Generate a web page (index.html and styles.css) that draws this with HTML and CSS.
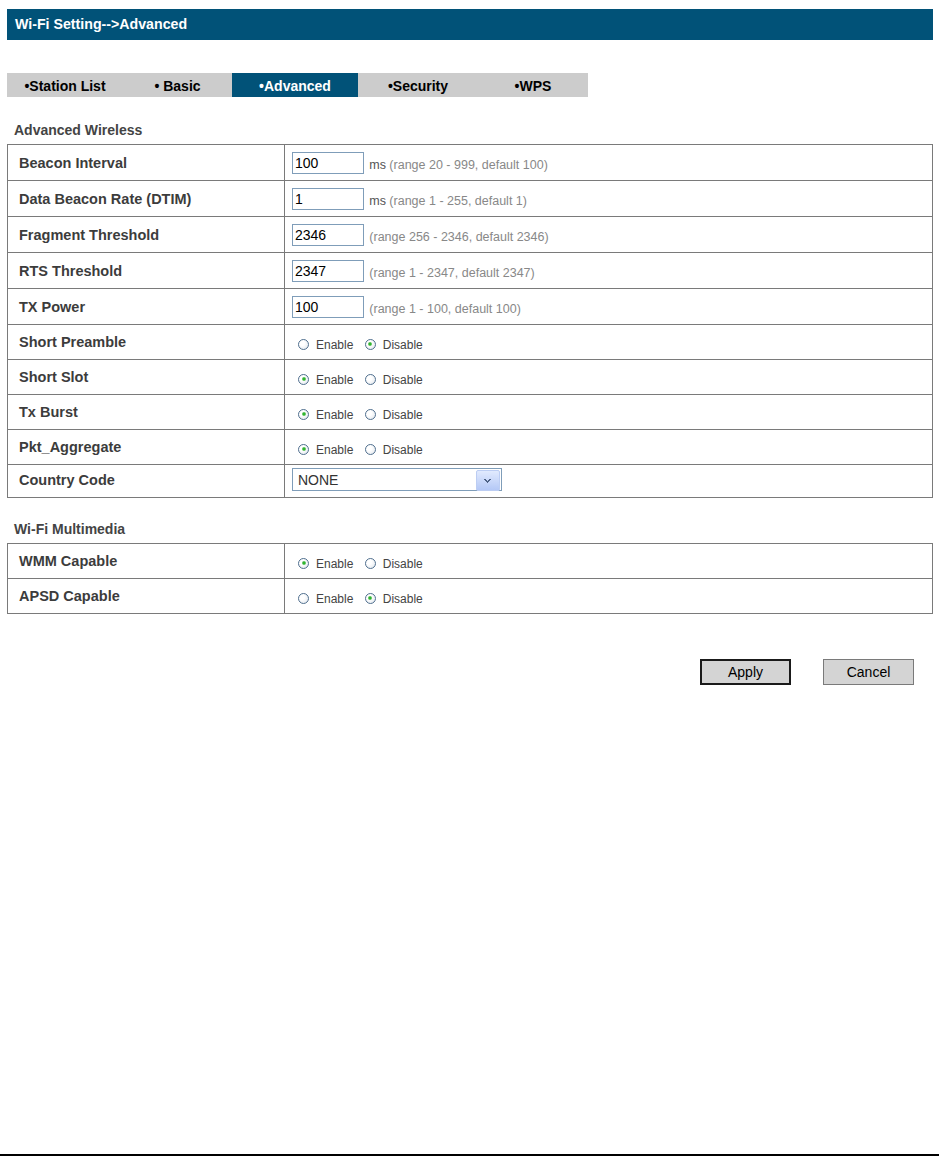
FILE: index.html
```html
<!doctype html>
<html lang="en">
    <head>
        <meta charset="UTF-8" />
        <title>Wi-Fi Setting - Advanced</title>
        <link rel="stylesheet" href="styles.css">
    </head>

    <body>
        <div class="page">
            <div class="title-bar">Wi-Fi Setting--&gt;Advanced</div>

            <div class="tabs">
                <a class="tab tab-station">&bull;Station List</a>
                <a class="tab tab-basic">&bull; Basic</a>
                <a class="tab tab-advanced active">&bull;Advanced</a>
                <a class="tab tab-security">&bull;Security</a>
                <a class="tab tab-wps">&bull;WPS</a>
            </div>

            <div class="section-title">Advanced Wireless</div>
            <table class="settings">
                <tr class="input-row">
                    <td class="label">Beacon Interval</td>
                    <td class="value">
                        <input type="text" value="100" />
                        <span class="unit">ms</span>
                        <span class="hint">(range 20 - 999, default 100)</span>
                    </td>
                </tr>
                <tr class="input-row">
                    <td class="label">Data Beacon Rate (DTIM)</td>
                    <td class="value">
                        <input type="text" value="1" />
                        <span class="unit">ms</span>
                        <span class="hint">(range 1 - 255, default 1)</span>
                    </td>
                </tr>
                <tr class="input-row">
                    <td class="label">Fragment Threshold</td>
                    <td class="value">
                        <input type="text" value="2346" />
                        <span class="hint">(range 256 - 2346, default 2346)</span>
                    </td>
                </tr>
                <tr class="input-row">
                    <td class="label">RTS Threshold</td>
                    <td class="value">
                        <input type="text" value="2347" />
                        <span class="hint">(range 1 - 2347, default 2347)</span>
                    </td>
                </tr>
                <tr class="input-row">
                    <td class="label">TX Power</td>
                    <td class="value">
                        <input type="text" value="100" />
                        <span class="hint">(range 1 - 100, default 100)</span>
                    </td>
                </tr>
                <tr class="radio-row">
                    <td class="label">Short Preamble</td>
                    <td class="value">
                        <label><input type="radio" name="preamble" />Enable</label>
                        <label><input type="radio" name="preamble" checked />Disable</label>
                    </td>
                </tr>
                <tr class="radio-row">
                    <td class="label">Short Slot</td>
                    <td class="value">
                        <label><input type="radio" name="slot" checked />Enable</label>
                        <label><input type="radio" name="slot" />Disable</label>
                    </td>
                </tr>
                <tr class="radio-row">
                    <td class="label">Tx Burst</td>
                    <td class="value">
                        <label><input type="radio" name="burst" checked />Enable</label>
                        <label><input type="radio" name="burst" />Disable</label>
                    </td>
                </tr>
                <tr class="radio-row">
                    <td class="label">Pkt_Aggregate</td>
                    <td class="value">
                        <label><input type="radio" name="aggregate" checked />Enable</label>
                        <label><input type="radio" name="aggregate" />Disable</label>
                    </td>
                </tr>
                <tr class="select-row">
                    <td class="label">Country Code</td>
                    <td class="value">
                        <div class="select-box">
                            <select>
                                <option>NONE</option>
                            </select>
                        </div>
                    </td>
                </tr>
            </table>

            <div class="section-title second">Wi-Fi Multimedia</div>
            <table class="settings">
                <tr class="radio-row">
                    <td class="label">WMM Capable</td>
                    <td class="value">
                        <label><input type="radio" name="wmm" checked />Enable</label>
                        <label><input type="radio" name="wmm" />Disable</label>
                    </td>
                </tr>
                <tr class="radio-row">
                    <td class="label">APSD Capable</td>
                    <td class="value">
                        <label><input type="radio" name="apsd" />Enable</label>
                        <label><input type="radio" name="apsd" checked />Disable</label>
                    </td>
                </tr>
            </table>

            <div class="actions">
                <button class="btn default">Apply</button>
                <button class="btn">Cancel</button>
            </div>
        </div>
        <div class="footer"></div>
    </body>
</html>
```

FILE: styles.css
```css
* {
    box-sizing: border-box;
}

body {
    margin: 0;
    background: white;
    font-family: "Liberation Sans", Arial, sans-serif;
    color: #333;
    min-height: 100vh;
    display: flex;
    flex-direction: column;
}

.page {
    padding: 9px 6px 0 7px;
    flex-grow: 1;
}

.title-bar {
    height: 31px;
    line-height: 31px;
    background: #015278;
    color: white;
    font-size: 14.2px;
    font-weight: bold;
    padding-left: 8px;
}

.tabs {
    display: flex;
    width: 581px;
    height: 24px;
    margin-top: 33px;
    background: #cccccc;
}

.tab {
    display: block;
    text-align: center;
    line-height: 26px;
    font-size: 14px;
    font-weight: bold;
    color: black;
    cursor: pointer;
}

.tab-station { width: 116px; }
.tab-basic { width: 109px; }
.tab-advanced { width: 126px; }
.tab-security { width: 120px; }
.tab-wps { width: 110px; }

.tab.active {
    background: #015278;
    color: white;
}

.section-title {
    font-size: 14px;
    font-weight: bold;
    color: #444;
    line-height: 16px;
    padding: 25px 0 6px 7px;
}

.section-title.second {
    padding-top: 23px;
}

.settings {
    width: 100%;
    border-collapse: collapse;
}

.settings td {
    border: 1px solid #7a7a7a;
    padding: 0;
}

.settings .label {
    width: 277px;
    padding-left: 11px;
    font-size: 14.5px;
    font-weight: bold;
    color: #3c3c3c;
}

.settings .value {
    padding-left: 7px;
    font-size: 12px;
}

.input-row td {
    height: 36px;
}

.radio-row td {
    height: 35px;
}

.radio-row .value {
    padding-top: 5px;
}

.select-row td {
    height: 33px;
    padding-bottom: 3px;
}

.value input[type="text"] {
    width: 72px;
    height: 22px;
    border: 1px solid #7f9db9;
    padding: 0 2px;
    font-family: "Liberation Sans", Arial, sans-serif;
    font-size: 14px;
    color: black;
    vertical-align: middle;
    margin: 0 2px 0 0;
}

.unit {
    color: #555;
    font-size: 12.5px;
    vertical-align: -3px;
}

.hint {
    color: #888;
    font-size: 12.5px;
    vertical-align: -3px;
}

.value label {
    color: #444;
    margin-right: 2px;
}

.value input[type="radio"] {
    appearance: none;
    width: 11px;
    height: 11px;
    margin: 0 7px 0 6px;
    border: 1px solid #51708f;
    border-radius: 50%;
    background: radial-gradient(circle at 35% 35%, #ffffff 30%, #dde3ea 100%);
    vertical-align: -1px;
    position: relative;
}

.value input[type="radio"]:checked::after {
    content: "";
    position: absolute;
    left: 2.5px;
    top: 2.5px;
    width: 4px;
    height: 4px;
    border-radius: 50%;
    background: radial-gradient(circle, #2fb52f 30%, #9fd69f 100%);
}

.select-box {
    position: relative;
    width: 210px;
    height: 23px;
}

.select-box select {
    appearance: none;
    width: 100%;
    height: 100%;
    border: 1px solid #7f9db9;
    background: white;
    padding: 0 0 0 5px;
    font-family: "Liberation Sans", Arial, sans-serif;
    font-size: 14px;
    color: #333;
    border-radius: 0;
}

.select-box::after {
    content: "";
    position: absolute;
    right: 2px;
    top: 2px;
    width: 22px;
    height: 19px;
    background:
        linear-gradient(45deg, transparent 40%, #4d6185 40%, #4d6185 65%, transparent 65%) no-repeat 7px 8px / 4px 4px,
        linear-gradient(-45deg, transparent 40%, #4d6185 40%, #4d6185 65%, transparent 65%) no-repeat 10px 8px / 4px 4px,
        linear-gradient(to bottom, #e1eafe, #b4c8f6);
    border: 1px solid #bccdf3;
    border-radius: 2px;
    pointer-events: none;
}

.actions {
    display: flex;
    justify-content: flex-end;
    gap: 32px;
    margin-top: 45px;
    padding-right: 19px;
}

.btn {
    width: 91px;
    height: 26px;
    background: #d4d4d4;
    border: 1px solid #7a7a7a;
    font-family: "Liberation Sans", Arial, sans-serif;
    font-size: 14px;
    color: black;
    cursor: pointer;
}

.btn.default {
    border: 2px solid #1a1a1a;
}

.footer {
    height: 2px;
    background: black;
}
```
